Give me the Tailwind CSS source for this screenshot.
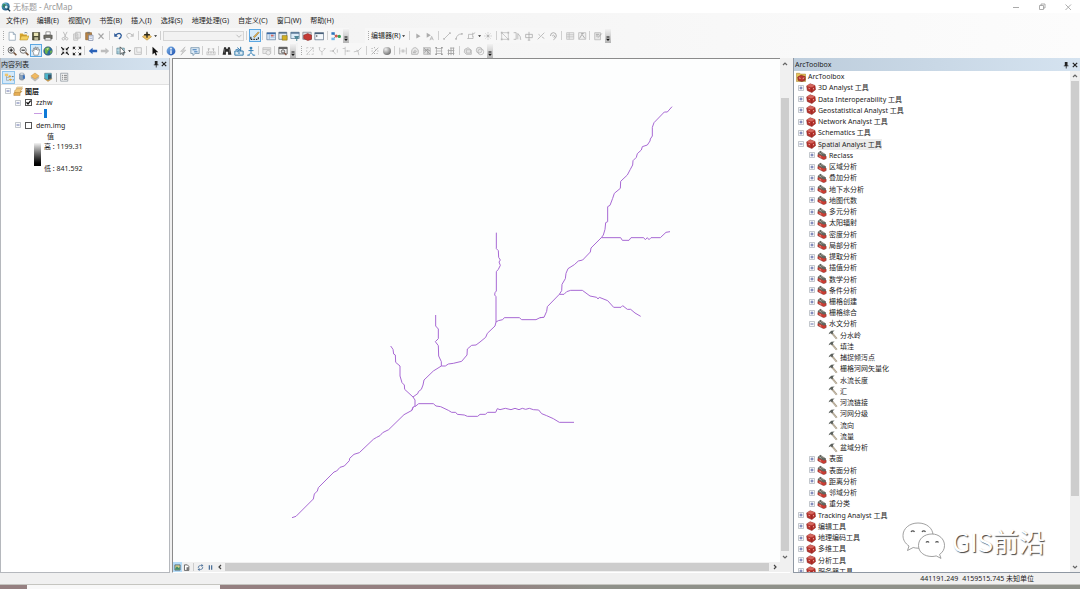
<!DOCTYPE html>
<html lang="zh-CN">
<head>
<meta charset="utf-8">
<title>无标题 - ArcMap</title>
<script src="https://cdn.jsdelivr.net/npm/@tailwindcss/browser@4"></script>
</head>
<body class="h-screen overflow-hidden flex flex-col bg-[#f0f0f0] text-[7px] leading-[11px] text-[#1c1c1c] font-['Noto_Sans','Noto_Sans_CJK_SC',sans-serif]">

<svg class="absolute size-0" aria-hidden="true">
  <defs>
    <linearGradient id="gBlue" x1="0" y1="0" x2="1" y2="1"><stop offset="0" stop-color="#7fb6ea"/><stop offset="1" stop-color="#1d4fae"/></linearGradient>
    <radialGradient id="gGlobe" cx=".4" cy=".35" r=".7"><stop offset="0" stop-color="#e4f6ff"/><stop offset=".5" stop-color="#3b8fb5"/><stop offset="1" stop-color="#1b4e7e"/></radialGradient>
    <radialGradient id="gBall" cx=".35" cy=".3" r=".7"><stop offset="0" stop-color="#eee"/><stop offset="1" stop-color="#777"/></radialGradient>
  </defs>
  <g fill="none">
  <symbol id="app" viewBox="0 0 12 12"><circle cx="5.6" cy="5.4" r="4.8" fill="url(#gGlobe)"/><path d="M2 3l3-1 1 2-2 3-2-1zM7 6l2 1-1 2z" fill="#2f8a58"/><circle cx="6.2" cy="6" r="2.3" fill="#d4f0f6" stroke="#174b68" stroke-width=".9"/><path d="M8 8l3 3" stroke="#1d3c50" stroke-width="1.6"/></symbol>
  <symbol id="new" viewBox="0 0 12 12"><path d="M2.5 1.5h5l2.5 2.6v7h-7.5z" fill="#fff" stroke="#8195a8" stroke-width=".8"/><path d="M7.5 1.5v2.6h2.5" fill="#dce9f5" stroke="#8195a8" stroke-width=".8"/></symbol>
  <symbol id="open" viewBox="0 0 12 12"><path d="M1 3h3.5l1 1.2h4v6.3H1z" fill="#d6a52e"/><path d="M2.8 6H12l-2 4.800H1z" fill="#f4d060" stroke="#a8821f" stroke-width=".6"/><path d="M6.500 2.300q2-1.600 3.600.4" stroke="#4d6a80" stroke-width=".9" fill="none"/></symbol>
  <symbol id="save" viewBox="0 0 12 12"><path d="M1.800 1.800h8.600v9H1.800z" fill="#4f4e35" stroke="#34331f" stroke-width=".7"/><path d="M3.400 2h5.300v4H3.400z" fill="#e9e4b4"/><path d="M4 7.500h4.600v3.200H4z" fill="#c2bf9c"/></symbol>
  <symbol id="print" viewBox="0 0 12 12"><path d="M3.500 1h5.200v4H3.500z" fill="#fff" stroke="#555" stroke-width=".7"/><path d="M1 5h10v4.300H1z" fill="#706f66" stroke="#333" stroke-width=".6"/><path d="M3 8h6l.8 3H2.200z" fill="#f5f5f5" stroke="#444" stroke-width=".6"/></symbol>
  <symbol id="cut" viewBox="0 0 12 12"><path d="M4 1l3.400 7M8.500 1L5 8" stroke="#b5b5b5"/><circle cx="4" cy="9.300" r="1.500" fill="none" stroke="#b5b5b5"/><circle cx="8" cy="9.300" r="1.500" fill="none" stroke="#b5b5b5"/></symbol>
  <symbol id="copy" viewBox="0 0 12 12"><path d="M4.500 1.500h5.500v7h-5.500zM2 3.500h5v7.500H2z" fill="#ececec" stroke="#b4b4b4" stroke-width=".9"/><path d="M3 5.500h3M3 7.300h3M3 9h3" stroke="#bbb" stroke-width=".7"/></symbol>
  <symbol id="paste" viewBox="0 0 12 12"><path d="M2 2h7v8.500H2z" fill="#b98547" stroke="#7f5422" stroke-width=".7"/><path d="M4 1h3v2H4z" fill="#777"/><path d="M5.500 5h5.300v6.300H5.500z" fill="#f7f9ff" stroke="#5f6e95" stroke-width=".7"/><path d="M6.500 7h3.300M6.500 9h3.300" stroke="#8797c0" stroke-width=".7"/></symbol>
  <symbol id="del" viewBox="0 0 12 12"><path d="M3 3l6 6.500M9 3L3 9.500" stroke="#a6a6a6" stroke-width="1.400"/></symbol>
  <symbol id="undo" viewBox="0 0 12 12"><path d="M3 5q5-4.500 7 0 0 3-3 4.500" stroke="#2c5a99" stroke-width="1.500" fill="none"/><path d="M1.500 2.500V7H6z" fill="#2c5a99"/></symbol>
  <symbol id="redo" viewBox="0 0 12 12"><path d="M9 5Q4 .5 2 5q0 3 3 4" stroke="#bcbcbc" stroke-width="1.200" fill="none"/><path d="M10.500 2.500V7H6z" fill="#c2c2c2"/></symbol>
  <symbol id="add" viewBox="0 0 12 12"><path d="M6 2.500l5.500 4.300L6 11 .5 6.800z" fill="#edc163" stroke="#af802b" stroke-width=".6"/><path d="M6 1v7M2.600 4.500h6.800" stroke="#2a2a20" stroke-width="1.700"/></symbol>
  <symbol id="caret" viewBox="0 0 5 12"><path d="M.8 5.200h3.600L2.600 7.200z" fill="#222"/></symbol>
  <symbol id="edit" viewBox="0 0 12 12"><path d="M4 7l6-6 1 1-5.500 6z" fill="#e9b450" stroke="#77551d" stroke-width=".5"/><path d="M1 7v3M1 10h1.800M4 10h1.800M7 10h1.800M10 7.500V10" stroke="#222" stroke-width="1.300"/></symbol>
  <symbol id="tbl" viewBox="0 0 12 12"><path d="M1 2h10.500v8.500H1z" fill="#dbe9f8" stroke="#5a7795" stroke-width=".8"/><path d="M1 2h10.500v1.800H1z" fill="#3c6ca8"/><path d="M4 4v6M5.500 5.500h5M5.500 7.500h5" stroke="#7b9fc5" stroke-width=".7"/><path d="M6 4.500h3v2H6z" fill="#d7695e"/></symbol>
  <symbol id="cat" viewBox="0 0 12 12"><path d="M1 1.500h9.500v8.500H1z" fill="#e2eaf2" stroke="#526679" stroke-width=".8"/><path d="M1 1.500h9.500v1.600H1z" fill="#44617e"/><path d="M5 5.500h6v5.500H5z" fill="#d2af25" stroke="#776211" stroke-width=".6"/></symbol>
  <symbol id="srch" viewBox="0 0 12 12"><path d="M1 1.500h10v7.500H1z" fill="#dcebf7" stroke="#51738e" stroke-width=".8"/><path d="M1 1.500h10v1.700H1z" fill="#4c6c8d"/><path d="M5 6h6l-1.500 3.500h-3zM7.500 9.500h1.200V12H7.500z" fill="#508797"/></symbol>
  <symbol id="tbw" viewBox="0 0 12 12"><path d="M1 1.500h10v8.500H1z" fill="#dfe4e8" stroke="#6c7580" stroke-width=".8"/><path d="M2 5l5-2 4.500 2v5L7 11.500 2 9z" fill="#c43a35" stroke="#7e1d1b" stroke-width=".6"/></symbol>
  <symbol id="py" viewBox="0 0 12 12"><path d="M1 2h10.500v8.500H1z" fill="#f4f8fb" stroke="#4b6279" stroke-width=".8"/><path d="M1 2h10.500v1.700H1z" fill="#47607a"/><path d="M2.500 5l1.500 1-1.500 1" stroke="#222" stroke-width=".7" fill="none"/></symbol>
  <symbol id="mb" viewBox="0 0 12 12"><path d="M2 3l4 3-4 4M6 6h4" stroke="#5d6d79" stroke-width=".8" fill="none"/><path d="M.5 1.500h4v3h-4z" fill="#2c75be"/><path d="M.5 8h4v3h-4z" fill="#75b9e8"/><circle cx="6.300" cy="6" r="1.800" fill="#d4564b"/><circle cx="10" cy="6.500" r="2" fill="#35a057"/></symbol>
  <symbol id="zin" viewBox="0 0 12 12"><circle cx="5" cy="5" r="3.700" fill="#f4f4f4" stroke="#555" stroke-width="1"/><path d="M3 5h4M5 3v4" stroke="#111" stroke-width="1.200"/><path d="M8 8l3.300 3" stroke="#75543d" stroke-width="1.800"/></symbol>
  <symbol id="zout" viewBox="0 0 12 12"><circle cx="5" cy="5" r="3.700" fill="#f4f4f4" stroke="#666" stroke-width="1"/><path d="M3 5h4" stroke="#111" stroke-width="1.200"/><path d="M8 8l3.300 3" stroke="#75543d" stroke-width="1.800"/></symbol>
  <symbol id="hand" viewBox="0 0 12 12"><path d="M3.500 11L3 8 1 5.700l1-.6 1.700 1.200L3 2.600l1-.3 1 2.500.1-3.600h1l.6 3.500 1-3 1 .3-.4 3.500L9.700 4l.8.500L9.200 8.500 8.500 11z" fill="#fff" stroke="#666" stroke-width=".7"/></symbol>
  <symbol id="globe" viewBox="0 0 12 12"><circle cx="6" cy="6" r="5.200" fill="#2e6d9e" stroke="#26425e" stroke-width=".5"/><path d="M2 3.500Q4 .8 7.500 1.500L8 4 5.500 7 5 10 2.500 8.500zM8.500 6l2-1 .3 2.500-2 2z" fill="#6fb34b"/><path d="M4 3l3-.6-1.500 2.500z" fill="#d8eea9"/></symbol>
  <symbol id="fin" viewBox="0 0 12 12"><path d="M1.500 1.500l2 2M10.500 1.500l-2 2M1.500 10.500l2-2M10.500 10.500l-2-2" stroke="#1c1c1c" stroke-width="1.300"/><path d="M5 2v3H2zM7 2v3h3zM5 10V7H2zM7 10V7h3z" fill="#1c1c1c"/></symbol>
  <symbol id="fout" viewBox="0 0 12 12"><path d="M1 1h3.500L1 4.500zM11 1H7.500L11 4.500zM1 11h3.500L1 7.500zM11 11H7.500L11 7.500z" fill="#1c1c1c"/><path d="M2 2l2.200 2.200M10 2L7.800 4.200M2 10l2.200-2.200M10 10L7.800 7.800" stroke="#1c1c1c"/></symbol>
  <symbol id="back" viewBox="0 0 12 12"><path d="M1 6l4.500-4v2.500H11v3H5.500V10z" fill="#2a62b8"/></symbol>
  <symbol id="fwd" viewBox="0 0 12 12"><path d="M11 6L6.500 2v2.500H1v3h5.500V10z" fill="#bdbdbd"/></symbol>
  <symbol id="self" viewBox="0 0 12 12"><path d="M1 2.500h9v7H1z" fill="#9dc5d5" stroke="#587f8e" stroke-width=".7"/><path d="M1 5h9M4 2.500v7M7 2.500v7" stroke="#e5f4f4" stroke-width=".7"/><path d="M5 1v9l2-1.800 1.500 3 1-.6-1.400-2.800H11z" fill="#fff" stroke="#222" stroke-width=".7"/></symbol>
  <symbol id="clr" viewBox="0 0 12 12"><path d="M2 2h8v8H2z" fill="#f3f3f3" stroke="#bbb"/><path d="M4.500 2v5.500H10" fill="none" stroke="#c7c7c7"/></symbol>
  <symbol id="arrow" viewBox="0 0 12 12"><path d="M3 1v9.200l2.300-2 1.600 3.300 1.600-.8L6.900 7.500H10z" fill="#111"/></symbol>
  <symbol id="info" viewBox="0 0 12 12"><circle cx="6" cy="6" r="5.300" fill="url(#gBlue)"/><path d="M6 5v4.500" stroke="#fff" stroke-width="1.600"/><circle cx="6" cy="3.200" r="1" fill="#fff"/></symbol>
  <symbol id="bolt" viewBox="0 0 12 12"><path d="M8.500 1L3 6.500h3L3.500 11 9.500 5H6.500z" fill="#d4d4d4" stroke="#aaa" stroke-width=".5"/></symbol>
  <symbol id="html" viewBox="0 0 12 12"><path d="M1 2h10v7H6l-2.500 2.500V9H1z" fill="#deebf6" stroke="#5d829f" stroke-width=".8"/><path d="M3 4.500h5M5 7h4" stroke="#3c78b7" stroke-width="1.200"/></symbol>
  <symbol id="meas" viewBox="0 0 12 12"><path d="M1 7h10v3.500H1z" fill="#eee" stroke="#b5b5b5" stroke-width=".7"/><path d="M3 3v3M9 3v3M2 3.500h3M7 3.500h3M3 7v2M6 7v2M9 7v2" stroke="#b5b5b5"/></symbol>
  <symbol id="bino" viewBox="0 0 12 12"><path d="M2.500 1.500h2.300l.6 2h1.200l.6-2h2.300l1.800 9H7.300V7H4.700v3.500H.7z" fill="#2b2b2b"/><path d="M3.300 3.500L2.700 8M8.700 3.500L9.300 8" stroke="#888" stroke-width=".7"/></symbol>
  <symbol id="gox" viewBox="0 0 12 12"><path d="M1 6h10v5H1z" fill="#dceaf3" stroke="#397fae" stroke-width="1.200"/><path d="M2 4.500h3.500M4 2l3 2.500L4 7M8 1v5" stroke="#2b75ad" stroke-width="1.200" fill="none"/><circle cx="6" cy="8.500" r="1" fill="#2b75ad"/></symbol>
  <symbol id="walk" viewBox="0 0 12 12"><circle cx="6" cy="2.500" r="1.700" fill="#3b85ba"/><path d="M6 4v4M3 5.500h6M6 8l-3 3M6 8l3 3M1.500 11h3M8 11h3" stroke="#3b85ba" stroke-width="1.200"/></symbol>
  <symbol id="tsl" viewBox="0 0 12 12"><path d="M1 2h9.500v7H1z" fill="#e9e9e9" stroke="#b9b9b9" stroke-width=".8"/><path d="M1 4h9" stroke="#bbb"/><circle cx="7.500" cy="8" r="2.700" fill="#eee" stroke="#b5b5b5" stroke-width=".8"/></symbol>
  <symbol id="vw" viewBox="0 0 12 12"><path d="M1 1.500h10v8H1z" fill="#eee" stroke="#4d4d4d" stroke-width=".9"/><path d="M1 1.500h10v2H1z" fill="#555"/><circle cx="6" cy="6.500" r="2" fill="#ddd" stroke="#333" stroke-width=".8"/><path d="M7.500 8l2.500 3" stroke="#7e4a3a" stroke-width="1.500"/></symbol>
  <symbol id="g1" viewBox="0 0 12 12"><path d="M2 10L10 2M2 2h2M8 10h2M2 5v2M10 5v2M2 10h2M2 2v1M10 9v1M8 2h2v2M6 2h1M5 10h1" stroke="#bdbdbd" stroke-width=".9" fill="none"/></symbol>
  <symbol id="g2" viewBox="0 0 12 12"><path d="M2 2h2M3 2v3l3 2 4-4M6 7v4M8 3h2" stroke="#bcbcbc" stroke-width=".9" fill="none"/></symbol>
  <symbol id="g3" viewBox="0 0 12 12"><path d="M1 6h4M5 6l3-4M5 6l3 4M10 4v4" stroke="#bcbcbc" stroke-width=".9"/><path d="M4 5h2v2H4z" fill="#b5b5b5"/></symbol>
  <symbol id="g4" viewBox="0 0 12 12"><path d="M5 1v10M5 6h6M2 3h3M8 5v2" stroke="#bcbcbc" stroke-width=".9"/></symbol>
  <symbol id="g5" viewBox="0 0 12 12"><path d="M1 7l5-1 4-4M6 6l1 5M4 5l2 1" stroke="#b8b8b8" stroke-width=".9" fill="none"/></symbol>
  <symbol id="g6" viewBox="0 0 12 12"><path d="M2 10L10 2" stroke="#aaa" stroke-width="1"/><path d="M2 3h1M5 2h1M9 6h1M8 9h1M5 9h1M2 6h1M6 5h1" stroke="#999" stroke-width="1.200"/></symbol>
  <symbol id="ball" viewBox="0 0 12 12"><circle cx="6" cy="6" r="4.800" fill="url(#gBall)"/></symbol>
  <symbol id="g7" viewBox="0 0 12 12"><path d="M2 2v8M10 2v8M3 6h2M7 6h2M5 4l2 4M7 4L5 8" stroke="#b3b3b3" stroke-width=".9"/></symbol>
  <symbol id="g8" viewBox="0 0 12 12"><path d="M2 10V6q1-4.500 5-4 4 2 3 6l-1 2z" fill="#e8e8e8" stroke="#aaa" stroke-width=".9"/><path d="M4 8q1-4 4-1.500M4 8h3" stroke="#a5a5a5" fill="none"/></symbol>
  <symbol id="g9" viewBox="0 0 12 12"><path d="M2 2h8v8H2z" fill="#ddd" stroke="#aaa" stroke-width=".8"/><path d="M2 2l8 8M3 8l3-4 4 2M2 5h4M7 3v7" stroke="#999" stroke-width=".9" fill="none"/></symbol>
  <symbol id="g10" viewBox="0 0 12 12"><path d="M3 1.500v9M9 1.500v9M2 3h8M2 6h8M2 9h8" stroke="#aaa" stroke-width=".9"/><path d="M1.500 2h2M8.500 2h2M1.500 10h2M8.500 10h2" stroke="#999" stroke-width="1.400"/></symbol>
  <symbol id="g11" viewBox="0 0 12 12"><path d="M2 5.500h8M2 9h8M3 4v7M6 2v9M9 2v9M5 2.500h5" stroke="#a5a5a5" stroke-width="1.100"/></symbol>
  <symbol id="g12" viewBox="0 0 12 12"><path d="M2 4l4-2 4 3v5H4L1.500 7.500z" fill="#e5e5e5" stroke="#b3b3b3" stroke-width=".9"/><path d="M4 4.500h5v4H4z" fill="none" stroke="#b5b5b5" stroke-width=".9"/></symbol>
  <symbol id="g13" viewBox="0 0 12 12"><circle cx="5" cy="5" r="3.500" fill="#e6e6e6" stroke="#b3b3b3" stroke-width=".9"/><circle cx="7" cy="7" r="3.500" fill="none" stroke="#b3b3b3" stroke-width=".9"/></symbol>
  <symbol id="e1" viewBox="0 0 12 12"><path d="M4 3l5 3.300L4 9z" fill="#acacac"/></symbol>
  <symbol id="e2" viewBox="0 0 12 12"><path d="M2 2l5 3-5 3z" fill="#acacac"/><path d="M6 11l2-4.500L10 11M7 9.500h2" stroke="#aaa" stroke-width=".9" fill="none"/></symbol>
  <symbol id="e3" viewBox="0 0 12 12"><path d="M2.500 9.500l7-7" stroke="#ababab" stroke-width=".9"/><path d="M1.500 8.500h2v2h-2zM8.500 1.500h2v2h-2z" fill="#bbb"/></symbol>
  <symbol id="e4" viewBox="0 0 12 12"><path d="M2.500 9.500q1-6 7-6" stroke="#ababab" stroke-width=".9" fill="none"/><path d="M1.500 8.500h2v2h-2zM8.500 2.500h2v2h-2z" fill="#bbb"/></symbol>
  <symbol id="e5" viewBox="0 0 12 12"><path d="M1.500 9h7V6M3 9V4h5l3-2M8 2v5" stroke="#b0b0b0" stroke-width=".9" fill="none"/></symbol>
  <symbol id="e6" viewBox="0 0 12 12"><path d="M6 1.500v9M1.500 6h9M3 3l6 6M9 3L3 9" stroke="#b0b0b0" stroke-width=".8" stroke-dasharray="1.500 1"/><path d="M5 5h2v2H5z" fill="#aaa"/></symbol>
  <symbol id="e7" viewBox="0 0 12 12"><path d="M2 2h8v8H2zM2 2l8 8" stroke="#b5b5b5" stroke-width=".8" fill="none"/><path d="M1 1h2v2H1zM9 1h2v2H9zM1 9h2v2H1zM9 9h2v2H9z" fill="#b8b8b8"/></symbol>
  <symbol id="e8" viewBox="0 0 12 12"><path d="M2 2h3v8H2M7 10V3l3 4v3M10 10h1" stroke="#aaa" stroke-width=".9" fill="none"/></symbol>
  <symbol id="e9" viewBox="0 0 12 12"><path d="M2 4h8v4H2zM6 1v10M4.500 11h3" stroke="#a5a5a5" stroke-width=".9" fill="none"/></symbol>
  <symbol id="e10" viewBox="0 0 12 12"><path d="M2 10l8-8M3 4l2 1.500M7 7l3 2" stroke="#aaa" stroke-width=".9"/></symbol>
  <symbol id="e11" viewBox="0 0 12 12"><path d="M3 6q0-4 3.500-4T10 6q-.5 3-3.500 4.500M5 6q1.500-2 3 0l-1 2" stroke="#a8a8a8" stroke-width="1.100" fill="none"/></symbol>
  <symbol id="e12" viewBox="0 0 12 12"><path d="M2 2h8.500v8H2zM2 4.500h8.500M2 7h8.500M5 2v8" stroke="#b5b5b5" stroke-width=".8" fill="#eee"/></symbol>
  <symbol id="e13" viewBox="0 0 12 12"><path d="M2 2h8.500v8H2z" stroke="#b0b0b0" stroke-width=".8" fill="#f0f0f0"/><path d="M3 9l3-5 3.500 5M5 3h3" stroke="#999" stroke-width=".9" fill="none"/></symbol>
  <symbol id="e14" viewBox="0 0 12 12"><path d="M2 2h7v8.500H2z" stroke="#b0b0b0" stroke-width=".8" fill="#e8e8e8"/><path d="M3.500 4h4M3.500 6h3M6 8l4.500-5" stroke="#a0a0a0" stroke-width="1"/></symbol>
  <symbol id="l1" viewBox="0 0 12 12"><path d="M1 2h4v3H1z" fill="#efc56c"/><path d="M3 5v5M3 6.500h3M3 10h3" stroke="#8d8d8d" stroke-width=".7"/><path d="M5 5l2-1 2 1-2 2zM5.500 9l2-1.300L10 9l-2.300 1.700z" fill="#dfa63f"/><path d="M9.500 5.500h2M10.500 9.500h1.300" stroke="#555"/></symbol>
  <symbol id="l2" viewBox="0 0 12 12"><path d="M2.500 7L6 5.500 10 7l-3 4-3.500-1z" fill="#d0d0d0"/><path d="M3 2.500v6q2.500 1.500 5.500 0v-6z" fill="#8fa3b8" stroke="#62758a" stroke-width=".6"/><ellipse cx="5.800" cy="2.500" rx="2.800" ry="1.300" fill="#e8edf2" stroke="#62758a" stroke-width=".5"/><path d="M7 4h2.500v4H7z" fill="#3b72bd"/></symbol>
  <symbol id="l3" viewBox="0 0 12 12"><path d="M1 7l5-3 5 3-5 4z" fill="#c4c4c4" stroke="#909090" stroke-width=".4"/><path d="M1 4.800L6 1.200l5 3.600-5 3.900z" fill="#f0b961" stroke="#b98432" stroke-width=".5"/></symbol>
  <symbol id="l4" viewBox="0 0 12 12"><path d="M1.500 8L6 5.500 11 8l-5 3.500z" fill="#d9a346" stroke="#96692a" stroke-width=".4"/><path d="M2 1.500h8v6L6 9.500 2 8z" fill="#4bb6cc" stroke="#57707c" stroke-width=".7"/><path d="M6 3v6l4-1.500V3z" fill="#39576c"/></symbol>
  <symbol id="l5" viewBox="0 0 12 12"><path d="M2 1.500h8.500v9.500H2z" fill="#f8f8f8" stroke="#7f8a94" stroke-width=".8"/><path d="M3.500 4h1.500M6 4h3.500M3.500 6.300h1.500M6 6.300h3.500M3.500 8.600h1.500M6 8.600h3.500" stroke="#666"/></symbol>
  <symbol id="lyr" viewBox="0 0 12 12"><path d="M1 8.500l3-2.200h7L8.500 8.500v3H1z" fill="#e5ad53" stroke="#a8752a" stroke-width=".5"/><path d="M2 5.500l3-2.300h6.500L9 5.500v2.300H2z" fill="#f3cb7d" stroke="#a8752a" stroke-width=".5"/><path d="M3.500 2.800l2-1.600h6L9.700 2.800z" fill="#fbe3ae" stroke="#b78a3e" stroke-width=".5"/></symbol>
  <symbol id="plus" viewBox="0 0 6 6"><path d="M.5.5h5v5h-5z" fill="#fafafa" stroke="#a9b0b8" stroke-width=".7"/><path d="M1.500 3h3M3 1.500v3" stroke="#3f4f9a" stroke-width=".8"/></symbol>
  <symbol id="minus" viewBox="0 0 6 6"><path d="M.5.5h5v5h-5z" fill="#fafafa" stroke="#a9b0b8" stroke-width=".7"/><path d="M1.500 3h3" stroke="#3f4f9a" stroke-width=".8"/></symbol>
  <symbol id="box" viewBox="0 0 12 12"><path d="M.8 3.500L5 1l5.800 2 .6 5L7 11.500 1.500 9z" fill="#b8322c" stroke="#7c2421" stroke-width=".6"/><path d="M.8 3.500L5 1l5.800 2L6.700 5.300z" fill="#d4675e"/><path d="M6.700 5.500L7 11" stroke="#842420" stroke-width=".7"/><path d="M3.200 5.800l1.300.5v1.200l-1.300-.5zM8.400 6.600l1.200-.6v1.200l-1.200.6z" fill="#efc8c2"/></symbol>
  <symbol id="root" viewBox="0 0 12 12"><path d="M.5 1.500h4l1 1h6v9H.5z" fill="#e6c25a" stroke="#a17a26" stroke-width=".6"/><path d="M2 6l4-2.200L11 5.500v4.300L7 11.500 2.500 10z" fill="#b93530" stroke="#6d1c19" stroke-width=".6"/><path d="M3.500 7l2 .7M8 8l2-1" stroke="#f0c9c4"/></symbol>
  <symbol id="set" viewBox="0 0 12 12"><path d="M1 5.500l2.500-2L11 7.500v2.800L8 11.700 1 8z" fill="#cc3c32" stroke="#6e2a25" stroke-width=".5"/><path d="M1 3.500L4 .8l6.700 4.500v1.500L8.500 8 1 4.800z" fill="#62645d"/><path d="M2.500 3.300l3 1.800M5 2.300l3 2.200" stroke="#c9cabf" stroke-width=".9"/><path d="M3 7.500l2 1.200" stroke="#f0c4b8"/></symbol>
  <symbol id="ham" viewBox="0 0 12 12"><path d="M4.500 3.500l6 7" stroke="#9a8e7c" stroke-width="2.200"/><path d="M4.500 3.500l6 7" stroke="#dcd3bd" stroke-width="1"/><path d="M.7 5.200Q1.500 2.500 4 1l4-.3L5.800 2.500 6.300 4 4.600 5 3.500 3.900z" fill="#5b605c"/></symbol>
  <symbol id="pin" viewBox="0 0 8 8"><path d="M2.800 1h2.700v3.500h1v.8H1.800v-.8h1zM3.800 5h.8v2.500h-.8z" fill="#222"/></symbol>
  <symbol id="x" viewBox="0 0 8 8"><path d="M1.800 1.800l4.400 4.400M6.200 1.800L1.800 6.200" stroke="#222" stroke-width="1.200"/></symbol>
  <symbol id="up" viewBox="0 0 8 8"><path d="M2 5L4 3 6 5" stroke="#666" stroke-width="1.200" fill="none"/></symbol>
  <symbol id="down" viewBox="0 0 8 8"><path d="M2 3L4 5 6 3" stroke="#666" stroke-width="1.200" fill="none"/></symbol>
  <symbol id="left" viewBox="0 0 8 8"><path d="M5 2L3 4 5 6" stroke="#444" stroke-width="1.200" fill="none"/></symbol>
  <symbol id="right" viewBox="0 0 8 8"><path d="M3 2L5 4 3 6" stroke="#444" stroke-width="1.200" fill="none"/></symbol>
  <symbol id="pale" viewBox="0 0 8 8"><path d="M1.500 2.800L4 5.300 6.500 2.800" stroke="#bdbdbd" stroke-width="1" fill="none"/></symbol>
  <symbol id="tick" viewBox="0 0 7 7"><path d="M1.500 3.300L3 5l2.700-3.400" stroke="#111" stroke-width="1.300" fill="none"/></symbol>
  <symbol id="dv" viewBox="0 0 12 12"><path d="M1.500 1.500h9v9h-9z" fill="#d9d38a" stroke="#43546a" stroke-width="1.300"/><path d="M2 8l3-4 3 3 2-2v5H2z" fill="#3e8f6b"/></symbol>
  <symbol id="lv" viewBox="0 0 12 12"><path d="M2.500 1.500h5L10 4v7H2.500z" fill="#fff" stroke="#444" stroke-width="1.300"/><path d="M6 5.500h4V11H6z" fill="#777"/></symbol>
  <symbol id="rf" viewBox="0 0 12 12"><path d="M2 7q0-4.500 4-4.500h2M10 5q0 4.500-4 4.500H4" stroke="#4b7099" stroke-width="1.400" fill="none"/><path d="M7.500 0v5L11 2.500zM4.500 7v5L1 9.500z" fill="#4b7099"/></symbol>
  <symbol id="ps" viewBox="0 0 12 12"><path d="M4 2v8M8 2v8" stroke="#3e6590" stroke-width="2"/></symbol>
  <symbol id="more" viewBox="0 0 6 13"><path d="M1.500 8h3" stroke="#111" stroke-width="1"/><path d="M1 9.800h4L3 12z" fill="#111"/></symbol>
  </g>
</svg>

<header class="flex h-[13px] shrink-0 items-center bg-white pl-px pr-[7px] text-[#9a9a9a]">
  <svg class="size-[10px]"><use href="#app"/></svg>
  <h1 class="ml-[2px] text-[8px]">无标题 - ArcMap</h1>
  <div class="ml-auto flex gap-[16px]">
    <button class="size-[10px]" aria-label="最小化"><svg viewBox="0 0 10 10"><path d="M2 5.500h6" stroke="#aaa"/></svg></button>
    <button class="size-[10px]" aria-label="还原"><svg viewBox="0 0 10 10"><path d="M2.500 3.500h4v4h-4zM4 3.500V2h4v4H6.500" stroke="#999" stroke-width=".8" fill="none"/></svg></button>
    <button class="size-[10px]" aria-label="关闭"><svg viewBox="0 0 10 10"><path d="M2.500 2.500l5.500 5.500M8 2.500L2.500 8" stroke="#999" stroke-width=".8"/></svg></button>
  </div>
</header>

<div class="shrink-0 bg-linear-to-r from-[#f0f0f0] to-[#fcfcfc]">
  <nav class="flex h-[15px] items-center gap-[9px] pl-[6px]">
    <button>文件(F)</button><button>编辑(E)</button><button>视图(V)</button><button>书签(B)</button><button>插入(I)</button><button>选择(S)</button><button>地理处理(G)</button><button>自定义(C)</button><button>窗口(W)</button><button>帮助(H)</button>
  </nav>
  <div class="flex h-[15px] items-center gap-[16px]" id="bar1"></div>
  <div class="flex h-[15px] items-center gap-[2px]" id="bar2"></div>
</div>

<main class="flex min-h-0 flex-1">
  <aside class="flex w-[170px] shrink-0 flex-col border-r border-b border-l border-[#b5b8bd] bg-white">
    <div class="flex h-[12px] shrink-0 items-center bg-linear-to-r from-[#bdcddc] to-[#d5e3f0] pr-px">
      <h2>内容列表</h2>
      <button class="ml-auto size-2" aria-label="固定"><svg class="size-2"><use href="#pin"/></svg></button>
      <button class="size-2" aria-label="关闭"><svg class="size-2"><use href="#x"/></svg></button>
    </div>
    <div class="flex h-[15px] shrink-0 items-center gap-px border-b border-[#e1e1e1] bg-[#f5f5f5] pl-px">
      <button class="flex size-[13px] items-center justify-center border border-[#8fc4ec] bg-[#d3e9fa]" aria-label="按绘制顺序列出"><svg class="size-[10px]"><use href="#l1"/></svg></button>
      <button class="px-px" aria-label="按源列出"><svg class="size-[10px]"><use href="#l2"/></svg></button>
      <button class="px-px" aria-label="按可见性列出"><svg class="size-[10px]"><use href="#l3"/></svg></button>
      <button class="px-px" aria-label="按选择列出"><svg class="size-[10px]"><use href="#l4"/></svg></button>
      <span class="mx-px h-[9px] w-px bg-[#bbb]"></span>
      <button aria-label="选项"><svg class="size-[10px]"><use href="#l5"/></svg></button>
    </div>
    <div class="flex flex-col pl-[4px]">
      <div class="flex h-[12px] items-center">
        <button class="size-[6px]" aria-label="折叠"><svg class="size-[6px]"><use href="#minus"/></svg></button>
        <svg class="ml-[2px] size-[10px]"><use href="#lyr"/></svg><b class="ml-[2px]">图层</b>
      </div>
      <div class="flex h-[11px] items-center pl-[10px]">
        <button class="size-[6px]" aria-label="折叠"><svg class="size-[6px]"><use href="#minus"/></svg></button>
        <span class="relative ml-[4px] flex size-[7px]">
          <input id="zz" type="checkbox" checked class="size-[7px] appearance-none border border-[#555] bg-white">
          <svg class="pointer-events-none absolute inset-0 size-[7px]"><use href="#tick"/></svg>
        </span>
        <label for="zz" class="ml-[4px]">zzhw</label>
      </div>
      <div class="flex h-[11px] items-center pl-[29px]">
        <span class="h-px w-[8px] bg-[#c89be2]"></span><span class="ml-[2px] h-[9px] w-[3px] bg-[#0f7ad8]"></span>
      </div>
      <div class="flex h-[12px] items-center pl-[10px]">
        <button class="size-[6px]" aria-label="折叠"><svg class="size-[6px]"><use href="#minus"/></svg></button>
        <input id="dem" type="checkbox" class="ml-[4px] size-[7px] appearance-none border border-[#555] bg-white">
        <label for="dem" class="ml-[4px]">dem.img</label>
      </div>
      <div class="h-[11px] pl-[42px]">值</div>
      <div class="flex pl-[29px]">
        <span class="mt-px h-[23px] w-[7px] bg-linear-to-b from-[#f4f4f4] to-black"></span>
        <div class="-mt-px ml-[3px] flex flex-col gap-[11px]"><span>高 : 1199.31</span><span>低 : 841.592</span></div>
      </div>
    </div>
  </aside>

  <section class="ml-[2px] flex min-w-0 flex-1 flex-col">
    <div class="flex min-h-0 flex-1">
      <div class="min-w-0 flex-1 overflow-hidden border-t border-l border-[#8b8b8b] bg-[#fdfefe]">
        <svg class="block h-full w-full" viewBox="519 177 1821 1509" preserveAspectRatio="xMinYMin meet" fill="none" stroke="#a869d4" stroke-width="3" stroke-linejoin="round">
          <g transform="translate(1620 270)">
            <path d="M396 50L382 66H373L342 98 337 112V138L331 147 330 153 322 165 307 170 304 180 292 191 289 202 279 212 278 225 271 238 262 255 242 274 241 295 223 310 218 325 210 346 203 350V395L197 398 195 418 190 435 184 443 153 474 151 486 128 510 115 513 103 524 84 536 78 550 76 566 66 583 65 602 58 613 22 650 20 664 12 682 0 683"/>
            <path d="M184 443H242L247 451H267L273 443H311L316 449 322 443 327 449 333 443H361L378 427 390 425"/>
            <path d="M58 613H72L80 605 92 601H127L150 618 170 622 174 627 178 622 203 632 221 652H243L248 647 262 658H272L285 669 302 679"/>
          </g>
          <g transform="translate(1140 660)">
            <path d="M490 292L480 293 468 299H425L418 293H373L368 299 355 302 348 306 345 318 322 340 317 352 300 366 288 375 275 376 262 387 261 405 245 424 220 430 205 432 196 438H184L160 453 132 480 129 495 124 508 115 515 114 520 99 531 105 540V558L98 563 96 570"/>
            <path d="M349 38V86L355 92 356 112 361 120 357 126 361 136 355 148 349 155V213L345 218 344 225 348 230V306"/>
            <path d="M167 285V318L175 327V356L166 365 175 377 176 408 184 425V438"/>
            <path d="M32 378L39 388 41 402 46 405 47 427 60 438V468L66 488 73 495 74 508 99 531"/>
          </g>
          <g transform="translate(840 990)">
            <path d="M400 230L396 241 372 254 326 299 308 308 300 317 290 322 280 328 238 368 222 373 209 385 208 392 193 408 180 412 170 423 162 426 115 473 112 483 103 492 100 507 48 559 36 563"/>
            <path d="M405 230L416 221H460L468 228 482 230 505 241 515 247H527L532 253 553 255 562 259H593L600 253H616L623 247H647L652 236 660 239 676 235 693 239 705 235 717 239 727 235 737 238 748 235 760 239 776 240 785 251 800 257 820 266 838 277H882"/>
          </g>
        </svg>
      </div>
      <div class="flex w-[10px] shrink-0 flex-col items-center bg-[#f0f0f0]">
        <button class="h-[11px]" aria-label="向上"><svg class="size-2"><use href="#up"/></svg></button>
        <span class="mt-[29px] w-[8px] flex-1 bg-[#cdcdcd]"></span>
        <button class="h-[11px]" aria-label="向下"><svg class="size-2"><use href="#down"/></svg></button>
      </div>
    </div>
    <div class="flex h-[11px] shrink-0 items-center border-b border-l border-b-white border-l-[#8b8b8b] bg-[#f0f0f0] pr-[10px]">
      <button class="flex h-full w-[9px] items-center justify-center bg-[#b5dcf7]" aria-label="数据视图"><svg class="size-[7px]"><use href="#dv"/></svg></button>
      <button class="flex w-[9px] justify-center" aria-label="布局视图"><svg class="size-[7px]"><use href="#lv"/></svg></button>
      <span class="mx-[2px] h-[8px] w-px bg-[#ccc]"></span>
      <button class="flex w-[9px] justify-center" aria-label="刷新"><svg class="size-[7px]"><use href="#rf"/></svg></button>
      <button class="flex w-[10px] justify-center" aria-label="暂停"><svg class="size-[7px]"><use href="#ps"/></svg></button>
      <button class="flex w-[10px] justify-center" aria-label="向左"><svg class="size-2"><use href="#left"/></svg></button>
      <span class="h-[8px] flex-1 bg-[#cdcdcd]"></span>
      <button class="flex w-[11px] justify-center" aria-label="向右"><svg class="size-2"><use href="#right"/></svg></button>
    </div>
  </section>

  <aside class="relative ml-[3px] flex w-[287px] shrink-0 flex-col border-b border-l border-[#8f98a3] bg-white">
    <div class="flex h-[13px] shrink-0 items-center bg-linear-to-r from-[#bdcddc] to-[#d5e3f0] pr-px pl-px">
      <h2>ArcToolbox</h2>
      <button class="ml-auto size-2" aria-label="固定"><svg class="size-2"><use href="#pin"/></svg></button>
      <button class="ml-px size-2" aria-label="关闭"><svg class="size-2"><use href="#x"/></svg></button>
    </div>
    <div class="flex min-h-0 flex-1 overflow-hidden">
      <ul id="tree" class="grid h-[506px] min-w-0 flex-1 auto-rows-fr"></ul>
      <div class="flex w-[10px] flex-col items-center bg-[#f0f0f0]">
        <button class="h-[10px]" aria-label="向上"><svg class="size-2"><use href="#up"/></svg></button>
        <span class="h-[415px] w-[8px] bg-[#cdcdcd]"></span>
        <button class="mt-auto h-[10px]" aria-label="向下"><svg class="size-2"><use href="#down"/></svg></button>
      </div>
    </div>
    <div class="pointer-events-none absolute right-[35px] bottom-[13px] flex items-center gap-[7px]">
      <svg class="h-[37px] w-[43px]" viewBox="0 0 43 37" stroke="#888" stroke-width=".8" fill="#fff">
        <path d="M16 1C7.500 1 1 6.500 1 13.500c0 4.500 2.300 8 6 10.500L5.500 28.500l5.700-3q2.400.7 5 .7C24.500 26 31 21 31 13.500S24.500 1 16 1z"/>
        <path d="M30 12C22 12 16.500 17 16.500 23.500S22 34.500 30 34.500q2.300 0 4.200-.6l4.800 2.500-1.400-4c3-2 4.900-5 4.900-8.900C42.500 17 37 12 30 12z"/>
        <path d="M9 10a2 2 0 0 1 3.500 0M20 10a2 2 0 0 1 3.500 0M24 20.500a1.700 1.700 0 0 1 3 0M33.500 20.500a1.700 1.700 0 0 1 3 0" fill="none" stroke="#555" stroke-width="1.200"/>
      </svg>
      <span class="font-['Noto_Sans_CJK_SC',sans-serif] text-[26px] leading-[37px] text-white text-shadow-[1px_1px_1px_#444]">GIS前沿</span>
    </div>
  </aside>
</main>

<footer class="flex h-[12px] shrink-0 items-center justify-end gap-[4px] border-b border-[#c5c5c0] bg-[#f0f0f0] pr-[46px]">
  <span>441191.249</span><span>4159515.745 未知单位</span>
</footer>
<div class="flex h-[4px] shrink-0 bg-linear-to-r from-[#958081] from-45% to-[#8f918a] to-55%">
  <span class="ml-[27px] w-[193px] bg-[#f8f8f8]"></span>
</div>

<script>
const svg = (id, cls) => `<svg class="${cls}"><use href="#${id}"/></svg>`;
const icon = id => `<button class="flex w-3 justify-center" aria-label="${id}">${svg(id, 'size-[10px]')}</button>`;
const active = id => `<button class="flex h-[13px] w-3 items-center justify-center border border-[#5ba7e2] bg-[#d5eafa]" aria-label="${id}">${svg(id, 'size-[10px]')}</button>`;
const parts = {
  '|': '<span class="mx-[2px] h-[9px] w-px bg-[#cfcfcf]"></span>',
  ';': '<span class="ml-px mr-[2px] h-[9px] w-px bg-[#cfcfcf]"></span>',
  ':': '<span class="ml-[3px] mr-px h-[9px] w-[2px] border-l border-dotted border-[#aaa]"></span>',
  'v': `<button class="w-[5px]" aria-label="更多选项">${svg('caret', 'h-[10px] w-[5px]')}</button>`,
  '>': `<button class="ml-px h-[14px] w-[6px] bg-linear-to-b from-[#f2f2f2] to-[#b4b4b4]" aria-label="工具条选项">${svg('more', 'h-[13px] w-[6px]')}</button>`,
  'combo': `<span class="relative flex"><select class="h-[10px] w-[81px] appearance-none border border-[#d5d5d5] bg-[#f2f2f2]" aria-label="比例尺" disabled></select>${svg('pale', 'pointer-events-none absolute top-px right-px size-2')}</span>`,
  'editor': `<button class="flex w-[37px] items-center">编辑器(R)${svg('caret', 'h-[10px] w-[5px]')}</button>`
};
const bar = text => `<div class="flex h-[15px] items-center bg-[#f7f7f7]" role="toolbar">` + text.split(' ').map(t => parts[t] || (t[0] === '*' ? active(t.slice(1)) : icon(t))).join('') + '</div>';
document.getElementById('bar1').innerHTML =
  bar(': new open save print | cut copy paste del | undo redo | add v | combo | *edit ; tbl cat srch tbw py | mb >') +
  bar(': editor ; e1 e2 | e3 e4 e5 v e6 | e7 e8 e9 e10 e11 | e12 e13 ; e14 >');
document.getElementById('bar2').innerHTML =
  bar(': zin zout *hand globe | fin fout ; back fwd ; self v clr | arrow ; info bolt html ; meas ; bino gox walk ; tsl ; vw >') +
  bar(': g1 g2 g3 g4 g5 | g6 ball ; g7 g8 g9 g10 g11 | g12 g13 >');

const pad = ['pl-[2px]', 'pl-[4px]', 'pl-[15px]', 'pl-[34px]'];
const pic = ['root', 'box', 'set', 'ham'];
const rows = [
  [0, 'ArcToolbox'],
  ...['3D Analyst 工具', 'Data Interoperability 工具', 'Geostatistical Analyst 工具', 'Network Analyst 工具', 'Schematics 工具', 'Spatial Analyst 工具'].map(t => [1, t]),
  ...['Reclass', '区域分析', '叠加分析', '地下水分析', '地图代数', '多元分析', '太阳辐射', '密度分析', '局部分析', '提取分析', '插值分析', '数学分析', '条件分析', '栅格创建', '栅格综合', '水文分析'].map(t => [2, t]),
  ...['分水岭', '填洼', '捕捉倾泻点', '栅格河网矢量化', '水流长度', '汇', '河流链接', '河网分级', '流向', '流量', '盆域分析'].map(t => [3, t]),
  ...['表面', '表面分析', '距离分析', '邻域分析', '重分类'].map(t => [2, t]),
  ...['Tracking Analyst 工具', '编辑工具', '地理编码工具', '多维工具', '分析工具', '服务器工具'].map(t => [1, t])
];
document.getElementById('tree').innerHTML = rows.map(([level, text]) => {
  const open = text === 'Spatial Analyst 工具' || text === '水文分析';
  const toggle = level === 1 || level === 2
    ? `<button class="mr-[2px] size-[6px]" aria-label="展开或折叠">${svg(open ? 'minus' : 'plus', 'size-[6px]')}</button>` : '';
  const mark = text === 'Spatial Analyst 工具' ? 'ml-[2px] bg-[#ececec]' : 'ml-[2px]';
  return `<li class="flex items-center ${pad[level]}">${toggle}${svg(pic[level], 'size-[10px]')}<span class="${mark}">${text}</span></li>`;
}).join('');
</script>
</body>
</html>
